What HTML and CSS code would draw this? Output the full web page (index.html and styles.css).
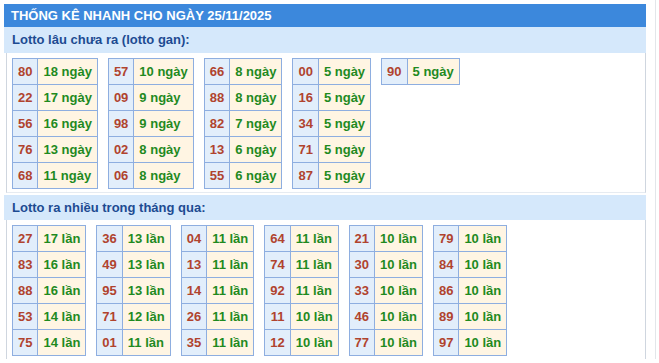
FILE: index.html
```html
<!DOCTYPE html>
<html lang="vi">
<head>
<meta charset="utf-8">
<link rel="stylesheet" href="styles.css">
</head>
<body>
<div class="wrap">
  <div class="title">THỐNG KÊ NHANH CHO NGÀY 25/11/2025</div>
  <div class="sub">Lotto lâu chưa ra (lotto gan):</div>
  <div class="box box-first">
    <div class="grid">
      <table class="lt"><tr><td class="n">80</td><td class="v">18 ngày</td></tr><tr><td class="n">22</td><td class="v">17 ngày</td></tr><tr><td class="n">56</td><td class="v">16 ngày</td></tr><tr><td class="n">76</td><td class="v">13 ngày</td></tr><tr><td class="n">68</td><td class="v">11 ngày</td></tr></table>
      <table class="lt"><tr><td class="n">57</td><td class="v">10 ngày</td></tr><tr><td class="n">09</td><td class="v">9 ngày</td></tr><tr><td class="n">98</td><td class="v">9 ngày</td></tr><tr><td class="n">02</td><td class="v">8 ngày</td></tr><tr><td class="n">06</td><td class="v">8 ngày</td></tr></table>
      <table class="lt"><tr><td class="n">66</td><td class="v">8 ngày</td></tr><tr><td class="n">88</td><td class="v">8 ngày</td></tr><tr><td class="n">82</td><td class="v">7 ngày</td></tr><tr><td class="n">13</td><td class="v">6 ngày</td></tr><tr><td class="n">55</td><td class="v">6 ngày</td></tr></table>
      <table class="lt"><tr><td class="n">00</td><td class="v">5 ngày</td></tr><tr><td class="n">16</td><td class="v">5 ngày</td></tr><tr><td class="n">34</td><td class="v">5 ngày</td></tr><tr><td class="n">71</td><td class="v">5 ngày</td></tr><tr><td class="n">87</td><td class="v">5 ngày</td></tr></table>
      <table class="lt"><tr><td class="n">90</td><td class="v">5 ngày</td></tr></table>
    </div>
  </div>
  <div class="sub sub-second">Lotto ra nhiều trong tháng qua:</div>
  <div class="box">
    <div class="grid">
      <table class="lt"><tr><td class="n">27</td><td class="v">17 lần</td></tr><tr><td class="n">83</td><td class="v">16 lần</td></tr><tr><td class="n">88</td><td class="v">16 lần</td></tr><tr><td class="n">53</td><td class="v">14 lần</td></tr><tr><td class="n">75</td><td class="v">14 lần</td></tr></table>
      <table class="lt"><tr><td class="n">36</td><td class="v">13 lần</td></tr><tr><td class="n">49</td><td class="v">13 lần</td></tr><tr><td class="n">95</td><td class="v">13 lần</td></tr><tr><td class="n">71</td><td class="v">12 lần</td></tr><tr><td class="n">01</td><td class="v">11 lần</td></tr></table>
      <table class="lt"><tr><td class="n">04</td><td class="v">11 lần</td></tr><tr><td class="n">13</td><td class="v">11 lần</td></tr><tr><td class="n">14</td><td class="v">11 lần</td></tr><tr><td class="n">26</td><td class="v">11 lần</td></tr><tr><td class="n">35</td><td class="v">11 lần</td></tr></table>
      <table class="lt"><tr><td class="n">64</td><td class="v">11 lần</td></tr><tr><td class="n">74</td><td class="v">11 lần</td></tr><tr><td class="n">92</td><td class="v">11 lần</td></tr><tr><td class="n">11</td><td class="v">10 lần</td></tr><tr><td class="n">12</td><td class="v">10 lần</td></tr></table>
      <table class="lt"><tr><td class="n">21</td><td class="v">10 lần</td></tr><tr><td class="n">30</td><td class="v">10 lần</td></tr><tr><td class="n">33</td><td class="v">10 lần</td></tr><tr><td class="n">46</td><td class="v">10 lần</td></tr><tr><td class="n">77</td><td class="v">10 lần</td></tr></table>
      <table class="lt"><tr><td class="n">79</td><td class="v">10 lần</td></tr><tr><td class="n">84</td><td class="v">10 lần</td></tr><tr><td class="n">86</td><td class="v">10 lần</td></tr><tr><td class="n">89</td><td class="v">10 lần</td></tr><tr><td class="n">97</td><td class="v">10 lần</td></tr></table>
    </div>
  </div>
</div>
<div class="side"></div>
</body>
</html>
```
FILE: styles.css
```css
html, body {
  margin: 0;
  padding: 0;
  background: #ffffff;
}
body {
  font-family: "Liberation Sans", Arial, sans-serif;
  font-size: 13px;
  position: relative;
}
.wrap {
  width: 642px;
  padding: 4px 0 0 4px;
}
.title {
  background: #3c88dc;
  color: #ffffff;
  font-weight: bold;
  font-size: 13px;
  height: 23px;
  line-height: 23px;
  padding-left: 7px;
}
.sub {
  background: #d5e8fb;
  color: #1d4b92;
  font-weight: bold;
  font-size: 13px;
  height: 26px;
  line-height: 26px;
  padding-left: 8px;
}
.sub-second {
  height: 25px;
  line-height: 25px;
  margin-top: 2px;
}
.box {
  margin-left: 2px;
  border-left: 1px solid #cfd6df;
  border-right: 1px solid #cfd6df;
  padding: 5px 0 3px 5px;
}
.box-first {
  border-bottom: 1px solid #e6ebf1;
}
.grid {
  display: flex;
  align-items: flex-start;
  gap: 10px;
}
.lt {
  border-collapse: collapse;
  border: 1px solid #8eaee0;
}
.lt td {
  border: 1px solid #8eaee0;
  line-height: 25px;
  padding: 0 5px;
  font-weight: bold;
  font-size: 13px;
  white-space: nowrap;
}
.lt .n {
  background: #e2eefb;
  color: #b0432e;
  text-align: center;
  padding: 0 5px;
}
.lt .v {
  background: #fff5e3;
  color: #1f8a1f;
}
.side {
  position: absolute;
  left: 655px;
  top: 0;
  width: 1px;
  height: 363px;
  background: #e3e6ea;
}
```
